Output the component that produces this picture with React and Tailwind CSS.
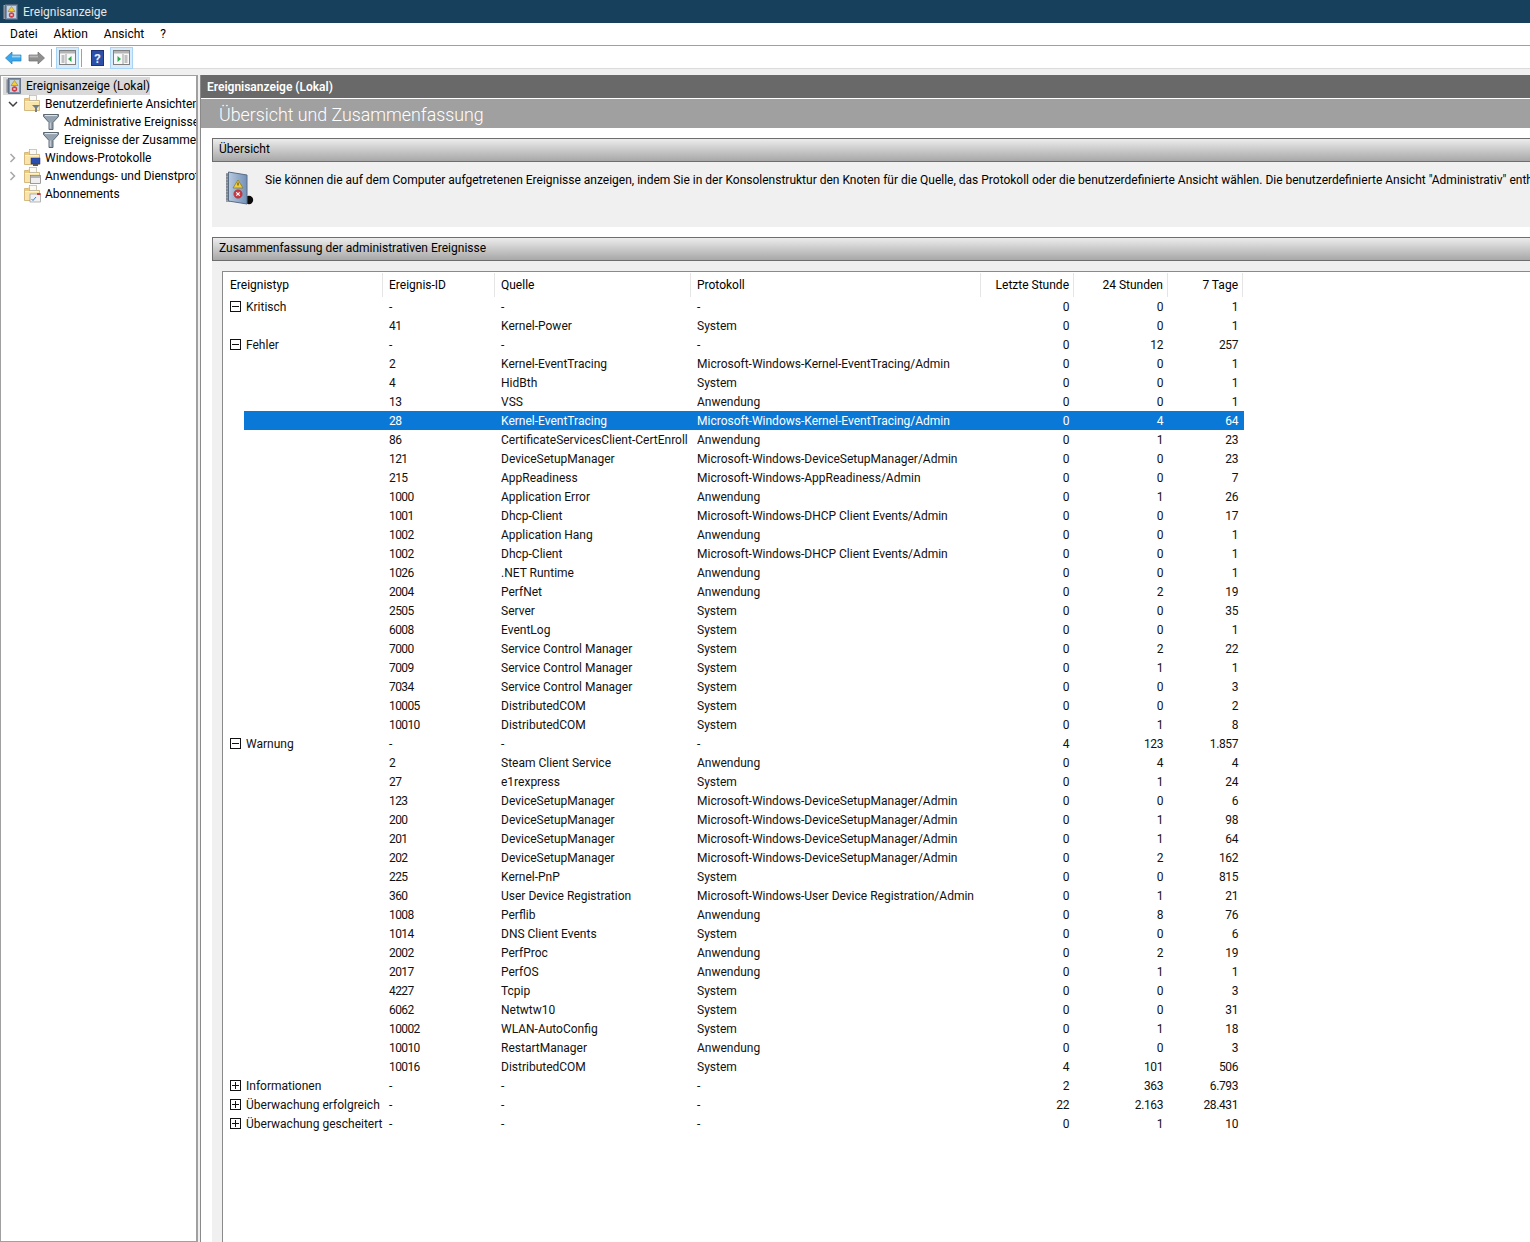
import React from 'react';

// [id, quelle, protokoll, stunde, tag, woche]
const kritisch = [['41', 'Kernel-Power', 'System', '0', '0', '1']];
const fehler = [
  ['2', 'Kernel-EventTracing', 'Microsoft-Windows-Kernel-EventTracing/Admin', '0', '0', '1'],
  ['4', 'HidBth', 'System', '0', '0', '1'],
  ['13', 'VSS', 'Anwendung', '0', '0', '1'],
  ['28', 'Kernel-EventTracing', 'Microsoft-Windows-Kernel-EventTracing/Admin', '0', '4', '64'],
  ['86', 'CertificateServicesClient-CertEnroll', 'Anwendung', '0', '1', '23'],
  ['121', 'DeviceSetupManager', 'Microsoft-Windows-DeviceSetupManager/Admin', '0', '0', '23'],
  ['215', 'AppReadiness', 'Microsoft-Windows-AppReadiness/Admin', '0', '0', '7'],
  ['1000', 'Application Error', 'Anwendung', '0', '1', '26'],
  ['1001', 'Dhcp-Client', 'Microsoft-Windows-DHCP Client Events/Admin', '0', '0', '17'],
  ['1002', 'Application Hang', 'Anwendung', '0', '0', '1'],
  ['1002', 'Dhcp-Client', 'Microsoft-Windows-DHCP Client Events/Admin', '0', '0', '1'],
  ['1026', '.NET Runtime', 'Anwendung', '0', '0', '1'],
  ['2004', 'PerfNet', 'Anwendung', '0', '2', '19'],
  ['2505', 'Server', 'System', '0', '0', '35'],
  ['6008', 'EventLog', 'System', '0', '0', '1'],
  ['7000', 'Service Control Manager', 'System', '0', '2', '22'],
  ['7009', 'Service Control Manager', 'System', '0', '1', '1'],
  ['7034', 'Service Control Manager', 'System', '0', '0', '3'],
  ['10005', 'DistributedCOM', 'System', '0', '0', '2'],
  ['10010', 'DistributedCOM', 'System', '0', '1', '8'],
];
const warnung = [
  ['2', 'Steam Client Service', 'Anwendung', '0', '4', '4'],
  ['27', 'e1rexpress', 'System', '0', '1', '24'],
  ['123', 'DeviceSetupManager', 'Microsoft-Windows-DeviceSetupManager/Admin', '0', '0', '6'],
  ['200', 'DeviceSetupManager', 'Microsoft-Windows-DeviceSetupManager/Admin', '0', '1', '98'],
  ['201', 'DeviceSetupManager', 'Microsoft-Windows-DeviceSetupManager/Admin', '0', '1', '64'],
  ['202', 'DeviceSetupManager', 'Microsoft-Windows-DeviceSetupManager/Admin', '0', '2', '162'],
  ['225', 'Kernel-PnP', 'System', '0', '0', '815'],
  ['360', 'User Device Registration', 'Microsoft-Windows-User Device Registration/Admin', '0', '1', '21'],
  ['1008', 'Perflib', 'Anwendung', '0', '8', '76'],
  ['1014', 'DNS Client Events', 'System', '0', '0', '6'],
  ['2002', 'PerfProc', 'Anwendung', '0', '2', '19'],
  ['2017', 'PerfOS', 'Anwendung', '0', '1', '1'],
  ['4227', 'Tcpip', 'System', '0', '0', '3'],
  ['6062', 'Netwtw10', 'System', '0', '0', '31'],
  ['10002', 'WLAN-AutoConfig', 'System', '0', '1', '18'],
  ['10010', 'RestartManager', 'Anwendung', '0', '0', '3'],
  ['10016', 'DistributedCOM', 'System', '4', '101', '506'],
];

const LogIcon = () => (
  <svg width="15" height="16" viewBox="0 0 15 16" className="shrink-0">
    <rect x="0.5" y="1" width="3" height="14" fill="#9aa1a8" />
    <path d="M0.5 3 H3 M0.5 5 H3 M0.5 7 H3 M0.5 9 H3 M0.5 11 H3 M0.5 13 H3" stroke="#5f666d" strokeWidth="0.6" />
    <rect x="2.5" y="0.5" width="12" height="15" fill="#7c94b2" stroke="#4f5f73" strokeWidth="0.7" />
    <rect x="4" y="2" width="9" height="12" fill="#c4d2e2" />
    <path d="M8.5 2.5 L12 7.5 H5 Z" fill="#f3cd3a" stroke="#8c7412" strokeWidth="0.5" />
    <circle cx="8.5" cy="11" r="2.7" fill="#cb3a43" />
    <path d="M7.4 9.9 L9.6 12.1 M9.6 9.9 L7.4 12.1" stroke="#fff" strokeWidth="0.8" />
  </svg>
);

const FolderIcon = ({ children }) => (
  <svg width="17" height="18" viewBox="0 0 17 18" className="shrink-0">
    <path d="M0.5 3.5 H4 L5 2.5 H5.5 V5.5 H15.5 V15.5 H0.5 Z" fill="#edc97c" stroke="#c9a664" strokeWidth="0.7" />
    <rect x="5.5" y="0.5" width="7" height="5" fill="#fbfbf4" stroke="#a8a89c" strokeWidth="0.6" />
    <rect x="1" y="6" width="14" height="9" fill="#f9e4a9" />
    <path d="M1 6.5 H15" stroke="#fdf3d0" />
    {children}
  </svg>
);

const FunnelIcon = () => (
  <svg width="16" height="18" viewBox="0 0 16 18" className="shrink-0">
    <path d="M0.5 1.5 H15.5 V3.5 L10 9.5 V16.5 L6 16.5 V9.5 L0.5 3.5 Z" fill="#94a3af" stroke="#4f5c67" strokeWidth="0.9" />
    <path d="M2 2.6 H14" stroke="#e6ebef" strokeWidth="1" />
    <path d="M7.2 9.5 V15.6" stroke="#d5dce2" strokeWidth="1" />
  </svg>
);

const ChevronDown = () => (
  <svg width="10" height="10" viewBox="0 0 10 10" className="shrink-0">
    <path d="M1 3 L5 7 L9 3" fill="none" stroke="#404040" strokeWidth="1.5" />
  </svg>
);

const ChevronRight = () => (
  <svg width="10" height="10" viewBox="0 0 10 10" className="shrink-0">
    <path d="M2.5 1 L6.5 5 L2.5 9" fill="none" stroke="#a6a6a6" strokeWidth="1.5" />
  </svg>
);

const TreeRow = ({ indent, chevron, icon, label, labelGap = 'ml-[4px]' }) => (
  <div className="flex h-[18px] items-center whitespace-nowrap">
    <div className={`shrink-0 ${indent}`}></div>
    {chevron}
    {icon}
    <span className={labelGap}>{label}</span>
  </div>
);

const PaneButton = ({ arrow }) => (
  <div className="flex h-[22px] w-[23px] shrink-0 items-center justify-center border border-[#a8d3f5] bg-[#d7ebfb]">
    <svg width="17" height="15" viewBox="0 0 17 15">
      <rect x="0.5" y="0.5" width="16" height="14" fill="#f8f8f8" stroke="#7f7f7f" />
      <rect x="1" y="1" width="15" height="2.5" fill="#b4b4b4" />
      {arrow === 'left' ? (
        <>
          <path d="M2.5 6 H5.5 M2.5 8 H5.5 M2.5 10 H5.5 M2.5 12 H5.5" stroke="#8a8a8a" />
          <path d="M7 4 V14" stroke="#a0a0a0" />
          <path d="M12.5 6 L9 9 L12.5 12 Z" fill="#2fa84f" />
        </>
      ) : (
        <>
          <path d="M11.5 6 H14.5 M11.5 8 H14.5 M11.5 10 H14.5 M11.5 12 H14.5" stroke="#8a8a8a" />
          <path d="M10 4 V14" stroke="#a0a0a0" />
          <path d="M4.5 6 L8 9 L4.5 12 Z" fill="#2fa84f" />
        </>
      )}
    </svg>
  </div>
);

const SectionBar = ({ label }) => (
  <div className="flex h-[24px] shrink-0 items-center border-y border-l border-[#6e6e6e] bg-gradient-to-b from-[#ececec] to-[#a8a8a8] pb-[2px] pl-[6px] text-black">
    {label}
  </div>
);

const ToggleBox = ({ open }) => (
  <svg width="11" height="11" viewBox="0 0 11 11" className="shrink-0">
    <rect x="0.5" y="0.5" width="10" height="10" fill="#fff" stroke="#111" />
    <path d="M2 5.5 H9" stroke="#111" />
    {!open && <path d="M5.5 2 V9" stroke="#111" />}
  </svg>
);

const Row = ({ type, open, data, selected }) => (
  <div className={`flex h-[19px] items-center whitespace-nowrap ${selected ? 'text-white' : 'text-[#111]'}`}>
    <div className="flex h-full w-[21px] shrink-0 items-center pl-[7px]">
      {type && <ToggleBox open={open} />}
    </div>
    <div className={`flex h-full flex-1 items-center ${selected ? 'bg-[#0a78d7]' : ''}`}>
      <div className="w-[145px] shrink-0 pl-[2px]">{type}</div>
      <div className="w-[112px] shrink-0 tracking-[-0.6px]">{data[0]}</div>
      <div className="w-[196px] shrink-0">{data[1]}</div>
      <div className="w-[284px] shrink-0">{data[2]}</div>
      <div className="w-[88px] shrink-0 text-right tracking-[-0.4px]">{data[3]}</div>
      <div className="w-[94px] shrink-0 text-right tracking-[-0.4px]">{data[4]}</div>
      <div className="w-[75px] shrink-0 text-right tracking-[-0.4px]">{data[5]}</div>
    </div>
  </div>
);

const HeaderCell = ({ width, right, label, first }) => (
  <div className={`flex h-[24px] shrink-0 items-center border-r border-[#e5e5e5] ${width} ${right ? 'justify-end pr-[4px]' : first ? 'pl-[7px]' : 'pl-[6px]'}`}>
    {label}
  </div>
);

const Group = ({ type, totals, rows, selectedIndex }) => (
  <>
    <Row type={type} open data={['-', '-', '-', ...totals]} />
    {rows.map((r, i) => (
      <Row key={i} data={r} selected={i === selectedIndex} />
    ))}
  </>
);

export default function App() {
  return (
    <div className='flex h-[1242px] w-[1530px] flex-col overflow-hidden bg-[#f0f0f0] font-["Roboto",sans-serif] text-[12px] leading-[16px] text-black'>
      {/* Titelleiste */}
      <div className="flex h-[23px] shrink-0 items-center bg-[#17405c] pl-[3px] text-[#e6e6e6]">
        <LogIcon />
        <span className="ml-[5px]">Ereignisanzeige</span>
      </div>

      {/* Menue */}
      <div className="flex h-[23px] shrink-0 items-center gap-[16px] border-b border-[#a0a0a0] bg-white pl-[10px]">
        <span>Datei</span>
        <span>Aktion</span>
        <span>Ansicht</span>
        <span>?</span>
      </div>

      {/* Toolbar */}
      <div className="flex h-[23px] shrink-0 items-center border-b border-[#dcdcdc] bg-white pl-[5px] pt-px">
        <svg width="17" height="16" viewBox="0 0 17 16" className="shrink-0">
          <path d="M0.5 8 L7 2 V5 H16 V11 H7 V14 Z" fill="#3aa7ec" stroke="#2a7fb8" strokeWidth="0.7" />
          <path d="M7 5.6 H15.4 V7.4 H7 Z" fill="#9ad6fa" />
        </svg>
        <svg width="17" height="16" viewBox="0 0 17 16" className="ml-[6px] shrink-0">
          <path d="M16.5 8 L10 2 V5 H1 V11 H10 V14 Z" fill="#8f8f8f" stroke="#6d6d6d" strokeWidth="0.7" />
          <path d="M1.6 5.6 H10 V7.4 H1.6 Z" fill="#b8b8b8" />
        </svg>
        <div className="ml-[6px] h-[18px] w-px shrink-0 bg-[#a0a0a0]"></div>
        <div className="ml-[4px]"><PaneButton arrow="left" /></div>
        <div className="ml-[2px] h-[18px] w-px shrink-0 bg-[#a0a0a0]"></div>
        <svg width="13" height="16" viewBox="0 0 13 16" className="ml-[9px] shrink-0">
          <rect x="0.5" y="0.5" width="12" height="15" fill="#2c4fa8" stroke="#1c3377" />
          <text x="6.5" y="12.5" textAnchor="middle" fontSize="13" fontWeight="700" fill="#e8ecf7">?</text>
        </svg>
        <div className="ml-[6px]"><PaneButton arrow="right" /></div>
      </div>

      {/* Hauptbereich */}
      <div className="flex min-h-0 flex-1 pt-[6px]">
        {/* Konsolenstruktur */}
        <div className="w-[198px] shrink-0 overflow-hidden border border-r-2 border-[#a0a0a0] bg-white pl-[2px] pt-px">
          <div className="flex h-[18px] w-[147px] items-center whitespace-nowrap bg-[#d9d9d9] pl-[3px]">
            <LogIcon />
            <span className="ml-[5px]">Ereignisanzeige (Lokal)</span>
          </div>
          <TreeRow
            indent="w-[5px]"
            chevron={<ChevronDown />}
            icon={<div className="ml-[6px]"><FolderIcon><path d="M8 10 H16 L13 13 V17 H11 V13 Z" fill="#6f7f8c" /></FolderIcon></div>}
            label="Benutzerdefinierte Ansichten"
          />
          <TreeRow indent="w-[40px]" icon={<FunnelIcon />} label="Administrative Ereignisse" labelGap="ml-[5px]" />
          <TreeRow indent="w-[40px]" icon={<FunnelIcon />} label="Ereignisse der Zusammenfassung" labelGap="ml-[5px]" />
          <TreeRow
            indent="w-[5px]"
            chevron={<ChevronRight />}
            icon={<div className="ml-[6px]"><FolderIcon><rect x="7" y="9" width="9" height="6" fill="#2b4fb0" stroke="#1c2f70" strokeWidth="0.5" /><rect x="9" y="15" width="5" height="2" fill="#555" /></FolderIcon></div>}
            label="Windows-Protokolle"
          />
          <TreeRow
            indent="w-[5px]"
            chevron={<ChevronRight />}
            icon={<div className="ml-[6px]"><FolderIcon><rect x="6.5" y="8.5" width="10" height="8" fill="#eee" stroke="#777" strokeWidth="0.7" /><rect x="7" y="9" width="9" height="2" fill="#b5b5b5" /></FolderIcon></div>}
            label="Anwendungs- und Dienstprotokolle"
          />
          <TreeRow
            indent="w-[21px]"
            icon={<FolderIcon><rect x="6" y="9" width="10.5" height="8" fill="#f2f2f2" stroke="#888" strokeWidth="0.6" /><path d="M7.5 14 L9 15.5 L12 12" fill="none" stroke="#2a6fc0" strokeWidth="0.9" /><rect x="13" y="8" width="3.5" height="2" fill="#cf3b44" /></FolderIcon>}
            label="Abonnements"
          />
        </div>

        {/* Inhalt */}
        <div className="ml-[2px] flex min-w-0 flex-1 flex-col border-l border-[#8a8a8a] bg-white">
          <div className="flex h-[23px] shrink-0 items-center bg-[#696969] pl-[6px] font-semibold text-white">
            Ereignisanzeige (Lokal)
          </div>
          <div className="mt-px flex h-[29px] shrink-0 items-center bg-[#a0a0a0] pl-[18px] pt-[3px] text-[17.8px] font-light text-white">
            Übersicht und Zusammenfassung
          </div>
          <div className="flex min-h-0 flex-1 flex-col pl-[11px] pt-[10px]">
            <SectionBar label="Übersicht" />
            <div className="flex h-[65px] shrink-0 items-start whitespace-nowrap bg-[#f0f0f0] pl-[13px] pt-[9px]">
              <svg width="29" height="34" viewBox="0 0 29 34" className="shrink-0">
                <defs>
                  <linearGradient id="bookCover" x1="0" y1="0" x2="1" y2="0">
                    <stop offset="0" stopColor="#b7c9de" />
                    <stop offset="1" stopColor="#7391b8" />
                  </linearGradient>
                </defs>
                <circle cx="24" cy="29" r="4.2" fill="#0c0c0c" />
                <path d="M1 2 H5 V31 H1 Z" fill="#9aa1a8" />
                <path d="M1 4 H5 M1 7 H5 M1 10 H5 M1 13 H5 M1 16 H5 M1 19 H5 M1 22 H5 M1 25 H5 M1 28 H5" stroke="#5f666d" strokeWidth="0.8" />
                <path d="M3.5 1 L22 4 V33 L3.5 30 Z" fill="url(#bookCover)" stroke="#5a6c83" />
                <path d="M13 9 L18 17 H8 Z" fill="#f3cd3a" stroke="#8b7413" strokeWidth="0.7" />
                <path d="M13 11.5 V14.5" stroke="#333" />
                <circle cx="13" cy="23" r="4.2" fill="#cb3a43" stroke="#9b2a32" strokeWidth="0.5" />
                <path d="M11.3 21.3 L14.7 24.7 M14.7 21.3 L11.3 24.7" stroke="#fff" strokeWidth="1.2" />
              </svg>
              <span className="ml-[11px] mt-[1px]">Sie können die auf dem Computer aufgetretenen Ereignisse anzeigen, indem Sie in der Konsolenstruktur den Knoten für die Quelle, das Protokoll oder die benutzerdefinierte Ansicht wählen. Die benutzerdefinierte Ansicht "Administrativ" enthält</span>
            </div>
            <div className="mt-[10px]"><SectionBar label="Zusammenfassung der administrativen Ereignisse" /></div>
            <div className="min-h-0 flex-1 bg-[#f0f0f0] pl-[10px] pt-[10px]">
              <div className="h-full border-l border-t border-[#8a8a8a] bg-white">
                <div className="flex h-[25px] items-center">
                  <HeaderCell width="w-[160px]" first label="Ereignistyp" />
                  <HeaderCell width="w-[112px]" label="Ereignis-ID" />
                  <HeaderCell width="w-[196px]" label="Quelle" />
                  <HeaderCell width="w-[290px]" label="Protokoll" />
                  <HeaderCell width="w-[93px]" right label="Letzte Stunde" />
                  <HeaderCell width="w-[94px]" right label="24 Stunden" />
                  <HeaderCell width="w-[75px]" right label="7 Tage" />
                </div>
                <div className="w-[1021px]">
                  <Group type="Kritisch" totals={['0', '0', '1']} rows={kritisch} />
                  <Group type="Fehler" totals={['0', '12', '257']} rows={fehler} selectedIndex={3} />
                  <Group type="Warnung" totals={['4', '123', '1.857']} rows={warnung} />
                  <Row type="Informationen" data={['-', '-', '-', '2', '363', '6.793']} />
                  <Row type="Überwachung erfolgreich" data={['-', '-', '-', '22', '2.163', '28.431']} />
                  <Row type="Überwachung gescheitert" data={['-', '-', '-', '0', '1', '10']} />
                </div>
              </div>
            </div>
          </div>
        </div>
      </div>
    </div>
  );
}
